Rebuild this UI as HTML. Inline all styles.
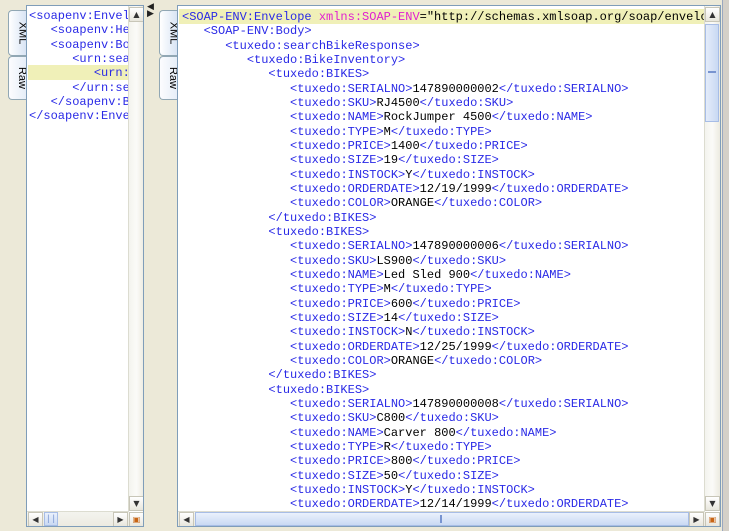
<!DOCTYPE html>
<html><head><meta charset="utf-8">
<style>
*{margin:0;padding:0;box-sizing:border-box}
body{width:729px;height:531px;background:#ece9d8;position:relative;overflow:hidden;font-family:"Liberation Mono",monospace}
.abs{position:absolute}
.frame{border:1px solid #7f9db9;background:#fff}
.tab{position:absolute;width:18px;background:linear-gradient(90deg,#fcfcfe,#e6eef8);border:1px solid #91a7b4;border-right:none;border-radius:4px 0 0 4px;font-family:"Liberation Sans",sans-serif;font-size:11px;color:#000}
.tab span{position:absolute;left:2px;top:50%;transform:translateY(-50%) rotate(90deg);white-space:nowrap}
.tab.sel{background:linear-gradient(90deg,#fff,#d8e4f4)}
.code{position:absolute;font-size:12px;line-height:14.33px;white-space:pre;color:#000}
.t{color:#2a2ae6}.a{color:#e020d0}
.vs{position:absolute;background:linear-gradient(90deg,#f3f3ee,#fbfbf8,#eceae0);border-left:1px solid #dcdcd0}
.btn{position:absolute;width:15px;height:15px;background:linear-gradient(#fff,#e8e6dc);border:1px solid #c8c6b8;font-size:8px;text-align:center;line-height:13px;color:#333;font-family:"DejaVu Sans",sans-serif}
.hl{position:absolute;background:#f0f0b8}
</style></head><body>

<div class="tab sel" style="left:8px;top:10px;height:46px"><span>XML</span></div>
<div class="tab" style="left:8px;top:56px;height:44px"><span>Raw</span></div>
<div class="abs frame" style="left:26px;top:5px;width:118px;height:522px;overflow:hidden">
  <div class="hl" style="left:1px;top:59px;width:100px;height:15px"></div>
  <div class="code" style="left:2px;top:3px;width:99px;overflow:hidden"><span class="t">&lt;soapenv:Envelope</span>
   <span class="t">&lt;soapenv:Header</span>
   <span class="t">&lt;soapenv:Body&gt;</span>
      <span class="t">&lt;urn:search</span>
         <span class="t">&lt;urn:sea</span>
      <span class="t">&lt;/urn:search</span>
   <span class="t">&lt;/soapenv:Body</span>
<span class="t">&lt;/soapenv:Envelope</span></div>
  <div class="vs" style="left:101px;top:0;width:16px;height:505px"></div>
  <div class="btn" style="left:102px;top:1px">▲</div>
  <div class="btn" style="left:102px;top:490px">▼</div>
  <div class="abs" style="left:0;top:505px;width:102px;height:16px;background:linear-gradient(#f3f3ee,#eceae0);border-top:1px solid #dcdcd0"></div>
  <div class="btn" style="left:1px;top:506px">◀</div>
  <div class="abs" style="left:17px;top:506px;width:14px;height:14px;background:linear-gradient(#eaf1fc,#c9d9f3);border:1px solid #a7bde6;font-size:9px;color:#7894d0;text-align:center;line-height:12px">||</div>
  <div class="btn" style="left:86px;top:506px">▶</div>
  <div class="btn" style="left:102px;top:506px;color:#c86414">▣</div>
</div>
<div class="abs" style="left:147px;top:4px;font-size:9px;line-height:7px;color:#222;font-family:'DejaVu Sans',sans-serif">◀<br>▶</div>

<div class="tab sel" style="left:159px;top:10px;height:46px"><span>XML</span></div>
<div class="tab" style="left:159px;top:56px;height:44px"><span>Raw</span></div>
<div class="abs frame" style="left:177px;top:5px;width:544px;height:522px;overflow:hidden">
  <div class="hl" style="left:1px;top:3px;width:525px;height:15px"></div>
  <div class="code" style="left:4px;top:4px;width:522px;overflow:hidden"><span class="t">&lt;SOAP-ENV:Envelope</span> <span class="a">xmlns:SOAP-ENV</span>="http://schemas.xmlsoap.org/soap/envelope/"
   <span class="t">&lt;SOAP-ENV:Body&gt;</span>
      <span class="t">&lt;tuxedo:searchBikeResponse&gt;</span>
         <span class="t">&lt;tuxedo:BikeInventory&gt;</span>
            <span class="t">&lt;tuxedo:BIKES&gt;</span>
               <span class="t">&lt;tuxedo:SERIALNO&gt;</span>147890000002<span class="t">&lt;/tuxedo:SERIALNO&gt;</span>
               <span class="t">&lt;tuxedo:SKU&gt;</span>RJ4500<span class="t">&lt;/tuxedo:SKU&gt;</span>
               <span class="t">&lt;tuxedo:NAME&gt;</span>RockJumper 4500<span class="t">&lt;/tuxedo:NAME&gt;</span>
               <span class="t">&lt;tuxedo:TYPE&gt;</span>M<span class="t">&lt;/tuxedo:TYPE&gt;</span>
               <span class="t">&lt;tuxedo:PRICE&gt;</span>1400<span class="t">&lt;/tuxedo:PRICE&gt;</span>
               <span class="t">&lt;tuxedo:SIZE&gt;</span>19<span class="t">&lt;/tuxedo:SIZE&gt;</span>
               <span class="t">&lt;tuxedo:INSTOCK&gt;</span>Y<span class="t">&lt;/tuxedo:INSTOCK&gt;</span>
               <span class="t">&lt;tuxedo:ORDERDATE&gt;</span>12/19/1999<span class="t">&lt;/tuxedo:ORDERDATE&gt;</span>
               <span class="t">&lt;tuxedo:COLOR&gt;</span>ORANGE<span class="t">&lt;/tuxedo:COLOR&gt;</span>
            <span class="t">&lt;/tuxedo:BIKES&gt;</span>
            <span class="t">&lt;tuxedo:BIKES&gt;</span>
               <span class="t">&lt;tuxedo:SERIALNO&gt;</span>147890000006<span class="t">&lt;/tuxedo:SERIALNO&gt;</span>
               <span class="t">&lt;tuxedo:SKU&gt;</span>LS900<span class="t">&lt;/tuxedo:SKU&gt;</span>
               <span class="t">&lt;tuxedo:NAME&gt;</span>Led Sled 900<span class="t">&lt;/tuxedo:NAME&gt;</span>
               <span class="t">&lt;tuxedo:TYPE&gt;</span>M<span class="t">&lt;/tuxedo:TYPE&gt;</span>
               <span class="t">&lt;tuxedo:PRICE&gt;</span>600<span class="t">&lt;/tuxedo:PRICE&gt;</span>
               <span class="t">&lt;tuxedo:SIZE&gt;</span>14<span class="t">&lt;/tuxedo:SIZE&gt;</span>
               <span class="t">&lt;tuxedo:INSTOCK&gt;</span>N<span class="t">&lt;/tuxedo:INSTOCK&gt;</span>
               <span class="t">&lt;tuxedo:ORDERDATE&gt;</span>12/25/1999<span class="t">&lt;/tuxedo:ORDERDATE&gt;</span>
               <span class="t">&lt;tuxedo:COLOR&gt;</span>ORANGE<span class="t">&lt;/tuxedo:COLOR&gt;</span>
            <span class="t">&lt;/tuxedo:BIKES&gt;</span>
            <span class="t">&lt;tuxedo:BIKES&gt;</span>
               <span class="t">&lt;tuxedo:SERIALNO&gt;</span>147890000008<span class="t">&lt;/tuxedo:SERIALNO&gt;</span>
               <span class="t">&lt;tuxedo:SKU&gt;</span>C800<span class="t">&lt;/tuxedo:SKU&gt;</span>
               <span class="t">&lt;tuxedo:NAME&gt;</span>Carver 800<span class="t">&lt;/tuxedo:NAME&gt;</span>
               <span class="t">&lt;tuxedo:TYPE&gt;</span>R<span class="t">&lt;/tuxedo:TYPE&gt;</span>
               <span class="t">&lt;tuxedo:PRICE&gt;</span>800<span class="t">&lt;/tuxedo:PRICE&gt;</span>
               <span class="t">&lt;tuxedo:SIZE&gt;</span>50<span class="t">&lt;/tuxedo:SIZE&gt;</span>
               <span class="t">&lt;tuxedo:INSTOCK&gt;</span>Y<span class="t">&lt;/tuxedo:INSTOCK&gt;</span>
               <span class="t">&lt;tuxedo:ORDERDATE&gt;</span>12/14/1999<span class="t">&lt;/tuxedo:ORDERDATE&gt;</span></div>
  <div class="vs" style="left:526px;top:0;width:16px;height:505px"></div>
  <div class="btn" style="left:527px;top:1px">▲</div>
  <div class="abs" style="left:527px;top:18px;width:14px;height:98px;background:linear-gradient(90deg,#e4ecfa,#c9d9f3);border:1px solid #a7bde6"></div>
  <div class="abs" style="left:530px;top:65px;width:8px;height:2px;background:#7894d0"></div>
  <div class="btn" style="left:527px;top:490px">▼</div>
  <div class="abs" style="left:0;top:505px;width:527px;height:16px;background:linear-gradient(#f3f3ee,#eceae0);border-top:1px solid #dcdcd0"></div>
  <div class="btn" style="left:1px;top:506px">◀</div>
  <div class="abs" style="left:17px;top:506px;width:494px;height:14px;background:linear-gradient(#eaf1fc,#c9d9f3);border:1px solid #a7bde6"></div>
  <div class="abs" style="left:262px;top:509px;width:2px;height:8px;background:#7894d0"></div>
  <div class="btn" style="left:511px;top:506px">▶</div>
  <div class="btn" style="left:527px;top:506px;color:#c86414">▣</div>
</div>
<div class="abs" style="left:722px;top:0;width:7px;height:531px;background:#d4d0c8;border-left:1px solid #9aa8c0"></div>
</body></html>
